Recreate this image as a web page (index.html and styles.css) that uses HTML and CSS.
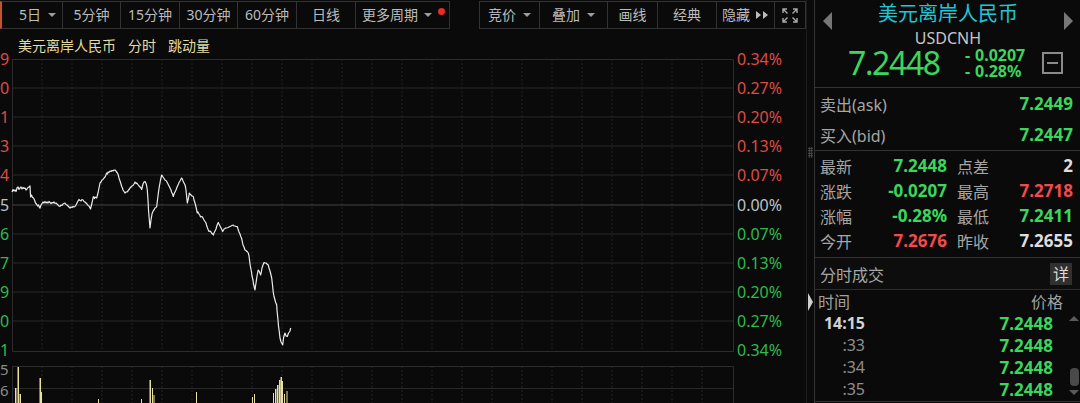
FILE: index.html
```html
<!DOCTYPE html>
<html lang="zh">
<head>
<meta charset="utf-8">
<title>USDCNH</title>
<link rel="stylesheet" href="styles.css">
</head>
<body>
<div class="app">
  <div class="main">
    <div class="toolbar">
      <div class="tb-group">
        <div class="btn first b63">5日<span class="caret"></span></div>
        <div class="btn b59">5分钟</div>
        <div class="btn b60">15分钟</div>
        <div class="btn b59">30分钟</div>
        <div class="btn b60">60分钟</div>
        <div class="btn b60">日线</div>
        <div class="btn b95 more">更多周期<span class="caret"></span><span class="dot"></span></div>
      </div>
      <div class="tb-group">
        <div class="btn b61">竞价<span class="caret"></span></div>
        <div class="btn b69">叠加<span class="caret"></span></div>
        <div class="btn b51">画线</div>
        <div class="btn b60">经典</div>
        <div class="btn b59 hide">隐藏<svg width="14" height="8" viewBox="0 0 14 8"><polygon points="1,0 6,4 1,8" fill="#bdbdbd"/><polygon points="8,0 13,4 8,8" fill="#bdbdbd"/></svg></div>
        <div class="btn b32"><svg width="18" height="17" viewBox="0 0 18 17" fill="none" stroke="#a8a8a8" stroke-width="1.4"><path d="M2 6V2H6M2 2L6.5 6.5"/><path d="M12 2H16V6M16 2L11.5 6.5"/><path d="M2 11V15H6M2 15L6.5 10.5"/><path d="M16 11V15H12M16 15L11.5 10.5"/></svg></div>
      </div>
    </div>
    <div class="chart">
      <div class="chart-title"><span>美元离岸人民币</span><span>分时</span><span>跳动量</span></div>
      <svg class="plot" width="806" height="373" viewBox="0 30 806 373">
        <g class="vgrid">
          <path d="M42 59V351M72 59V351M102 59V351M132 59V351M162 59V351M192 59V351M222 59V351M252 59V351M282 59V351M312 59V351M342 59V351M372 59V351M402 59V351M432 59V351M462 59V351M492 59V351M522 59V351M552 59V351M582 59V351M612 59V351M642 59V351M672 59V351M702 59V351"/>
          <path d="M42 366V403M72 366V403M102 366V403M132 366V403M162 366V403M192 366V403M222 366V403M252 366V403M282 366V403M312 366V403M342 366V403M372 366V403M402 366V403M432 366V403M462 366V403M492 366V403M522 366V403M552 366V403M582 366V403M612 366V403M642 366V403M672 366V403M702 366V403"/>
        </g>
        <g class="hgrid">
          <path d="M12 88H733M12 117H733M12 146H733M12 175H733M12 234H733M12 263H733M12 292H733M12 321H733M12 388.5H733"/>
        </g>
        <path class="zero" d="M12 205H733"/>
        <path class="frame" d="M12.5 59.5H733.5V351.5H12.5Z"/>
        <path class="frame" d="M12.5 403V366.5H733.5V403"/>

        <g class="bars">
          <rect x="15" y="388" width="1.5" height="15"/>
          <rect x="17.5" y="367" width="1.5" height="36"/>
          <rect x="19.5" y="394" width="1.5" height="9"/>
          <rect x="39.5" y="378" width="1.5" height="25"/>
          <rect x="41" y="392" width="1" height="11"/>
          <rect x="98" y="399" width="1" height="4"/>
          <rect x="141" y="399" width="1" height="4"/>
          <rect x="149.5" y="380" width="1.5" height="23"/>
          <rect x="152" y="388" width="1" height="15"/>
          <rect x="153.5" y="395" width="1" height="8"/>
          <rect x="196" y="392" width="1" height="11"/>
          <rect x="252" y="397" width="1" height="6"/>
          <rect x="254" y="394" width="1" height="9"/>
          <rect x="273" y="393" width="1" height="10"/>
          <rect x="275" y="389" width="1.5" height="14"/>
          <rect x="277" y="385" width="1.5" height="18"/>
          <rect x="279" y="380" width="1.5" height="23"/>
          <rect x="280.5" y="377" width="1.5" height="26"/>
          <rect x="282" y="381" width="1" height="22"/>
          <rect x="284" y="394" width="1" height="9"/>
          <rect x="286.5" y="391" width="1" height="12"/>
        </g>

        <polyline class="line" points="12,192 13,189.5 14,191 15,190 16,191.5 17,188 18,187 19,189.5 20,188 21,187 22,189 23,187.5 24,188.5 25,188 26,190 27,189 28,187.5 29,187 30,186 30.6,197 31.5,195 32.5,197.5 33.5,198 34.5,200 35.5,203 36.5,204 37.5,206 38.5,205 39.5,207.5 40,208 41,205 42,203.5 43,202 44,203 45,201.5 46,203 47,202 48,203 49,201.5 50,202.5 51,203.5 52,202.5 53,203 54,202 55,203.5 56,203 57,204 58,205 59,206 60,206.5 61,205 62,205.5 63,204 64,203.5 65,203 66,204.5 67,205 68,206 69,207 70,208 71,207 72,207.5 73,206.5 74,207 75,206.5 76,205 77,203 78,201 79,199.5 80,200.5 81,201 82,199.5 83,200 84,201.5 85,202 86,203 87,204 88,205.5 89,206 90,208 90.5,209 91.5,205 92,203 93.3,196.5 94.5,198.5 95,197 96.7,198 97.5,195 98,193 99,188 100,183 101,182 102,180 103,179.5 104,178 105,177 105.5,176 106.7,173 107.5,174 108,172 109,172.5 110,171 111,171.5 112,170.5 113,171 114,170 115,170 116,171 116.5,172 117.5,173 118.3,175 119,178 120,181 121,184 121.7,186.5 122.5,188 123,190 124,191.5 125,193 126,192 127,192 128,191 128.5,190 129.5,189 130,188 131,187 132,186 133,185.5 134,184 135,182 136,183.5 136.5,183 137.5,184 138.3,185 139,186 140,187 141,188 141.7,189.5 142.5,186 143,184 144,182 145,181.5 146,183.5 146.5,185 147.3,190 148,200 148.5,210 149.5,222 150,228 151,220 152,214 152.7,212 153.5,210.5 154,210 155,208 156,207.5 156.7,206.5 157.5,200 158.5,192 159.3,186.5 160,183 160.5,180 161.7,175 162.5,176 163,177 164,178.5 165,180 166,180.5 166.7,181.5 167.5,183 168,184 169,186 170,188 171,190 171.5,192 172.5,194 173.3,196.5 174,194 175,192 176,190 176.7,188 177.5,186 178.5,184 179,182.5 180,181 181,179 181.7,178 182.5,179.5 183,181 184,183 185,185 185.5,187 186,190 187.3,203 188,200 188.5,198 189.3,193 190,194 191,195 192,196 193.3,196.5 194,200 195,203 196,207 197.3,213 198,212 199,214 200,215.5 200.5,217 201.7,216.5 202.5,217 203,218 204,220 205,221.5 206,223 206.5,225 207.5,228 208.3,230 209,231.5 210,231 211,232 211.5,233 212.5,234 213.3,235 214,233 215,231 216,229 216.5,227 217.5,224 218.3,222.5 219,224 220,226 221,228 221.5,229 222.7,231.5 223.5,230 224,229 225,228.5 225.5,228 226.7,228 228,227.5 229,227 230,226.5 231,226 232,225.5 233.3,225 234,226 235,226 236,226.5 237.3,226.5 238,229 239,232 240,234 240.7,236.5 241.5,238 242,240 243,245 244,247 245,250 246,250.5 246.5,251 247.5,252 248.3,253 249,256 249.5,260 250,264 250.7,268 251.5,272 252,276 253,280 253.5,284 254.5,288 255,290 255.5,286 256,283 257,276 258,271 258.3,270 259,271 259.5,272 260.3,274 260.7,275 261.5,271 262,268 263,265 264,262.5 265,263 266,263 267,264 268.3,265 269,268 270,271 271,275 271.7,278 272.5,285 273.2,292 274,296.5 275,300 275.5,302 276.7,305 277,310 277.5,315 278,320 278.5,326 279.3,332 280,338 281,342 282,343.5 282.7,345 283.2,341 283.5,338 284.3,335 285,333 285.5,334.5 286,336 287.3,336.5 288,334.5 288.5,333 289.3,332 290,331 290.7,328"/>

        <g class="ax">
          <text class="red" x="0" y="65">9</text>
          <text class="red" x="0" y="94">0</text>
          <text class="red" x="0" y="123">1</text>
          <text class="red" x="0" y="152">3</text>
          <text class="red" x="0" y="181">4</text>
          <text class="gry" x="0" y="211">5</text>
          <text class="grn" x="0" y="240">6</text>
          <text class="grn" x="0" y="269">7</text>
          <text class="grn" x="0" y="298">9</text>
          <text class="grn" x="0" y="327">0</text>
          <text class="grn" x="0" y="356">1</text>
          <text class="vol" x="0" y="375">5</text>
          <text class="vol" x="0" y="396">6</text>

          <text class="red" x="737" y="65">0.34%</text>
          <text class="red" x="737" y="94">0.27%</text>
          <text class="red" x="737" y="123">0.20%</text>
          <text class="red" x="737" y="152">0.13%</text>
          <text class="red" x="737" y="181">0.07%</text>
          <text class="gry" x="737" y="211">0.00%</text>
          <text class="grn" x="737" y="240">0.07%</text>
          <text class="grn" x="737" y="269">0.13%</text>
          <text class="grn" x="737" y="298">0.20%</text>
          <text class="grn" x="737" y="327">0.27%</text>
          <text class="grn" x="737" y="356">0.34%</text>
        </g>
      </svg>
    </div>
  </div>

  <div class="splitter">
    <div class="grip"></div>
    <div class="pull"></div>
  </div>

  <div class="panel">
    <div class="quote-head">
      <div class="head-top">
        <span class="tri-left"></span>
        <div class="names">
          <div class="cn-name">美元离岸人民币</div>
          <div class="code">USDCNH</div>
        </div>
        <span class="tri-right"></span>
      </div>
      <div class="price-row">
        <div class="big-price">7.2448</div>
        <div class="changes">
          <div class="chg"><span class="sign">-</span>0.0207</div>
          <div class="chg"><span class="sign">-</span>0.28%</div>
        </div>
        <div class="collapse"><span></span></div>
      </div>
    </div>

    <div class="askbid">
      <div class="ab-row"><span class="lbl">卖出(ask)</span><span class="val up">7.2449</span></div>
      <div class="ab-row"><span class="lbl">买入(bid)</span><span class="val up">7.2447</span></div>
    </div>

    <div class="stats">
      <span class="lbl">最新</span><span class="val up">7.2448</span><span class="lbl l2">点差</span><span class="val wht">2</span>
      <span class="lbl">涨跌</span><span class="val up">-0.0207</span><span class="lbl l2">最高</span><span class="val dn">7.2718</span>
      <span class="lbl">涨幅</span><span class="val up">-0.28%</span><span class="lbl l2">最低</span><span class="val up">7.2411</span>
      <span class="lbl">今开</span><span class="val dn">7.2676</span><span class="lbl l2">昨收</span><span class="val wht">7.2655</span>
    </div>

    <div class="trade-head">
      <span class="lbl">分时成交</span>
      <span class="detail">详</span>
    </div>

    <div class="trades">
      <div class="trades-cols"><span>时间</span><span>价格</span></div>
      <div class="trades-body">
        <div class="trade-rows">
          <div class="tr"><span class="t strong">14:15</span><span class="p">7.2448</span></div>
          <div class="tr"><span class="t">:33</span><span class="p">7.2448</span></div>
          <div class="tr"><span class="t">:34</span><span class="p">7.2448</span></div>
          <div class="tr"><span class="t">:35</span><span class="p">7.2448</span></div>
        </div>
        <div class="scroll">
          <span class="s-up"></span>
          <span class="s-thumb"></span>
          <span class="s-down"></span>
        </div>
      </div>
    </div>
  </div>
</div>
</body>
</html>
```

FILE: styles.css
```css
* { box-sizing: border-box; margin: 0; padding: 0; }
html, body { width: 1080px; height: 403px; overflow: hidden; background: #0a0a0a; }
body { font-family: "Noto Sans", "Noto Sans CJK SC", sans-serif; color: #a8a8a8; }

.app { display: flex; height: 403px; }
.main { width: 806px; display: flex; flex-direction: column; }

/* toolbar */
.toolbar { height: 30px; padding-top: 1px; display: flex; justify-content: space-between; }
.tb-group { display: flex; }
.btn {
  height: 28px; border: 1px solid #333; margin-right: -1px;
  display: flex; align-items: center; justify-content: center; gap: 7px;
  font-size: 14px; line-height: 1; color: #bcbcbc;
}
.tb-group .btn:last-child { margin-right: 0; }
.btn.first { border-left: 2px solid #c2532c; justify-content: flex-start; padding-left: 17px; }
.b32 { width: 32px; } .b51 { width: 51px; } .b59 { width: 59px; } .b60 { width: 60px; }
.b61 { width: 61px; } .b63 { width: 63px; } .b69 { width: 69px; } .b95 { width: 95px; }
.caret { width: 0; height: 0; border-left: 4px solid transparent; border-right: 4px solid transparent; border-top: 4px solid #9c9c9c; }
.more { gap: 6px; padding-left: 2px; }
.dot { width: 7px; height: 7px; border-radius: 50%; background: #ec2a2c; align-self: flex-start; margin-top: 6px; }
.hide { gap: 5px; }

/* chart */
.chart { position: relative; flex: 1; }
.chart-title { position: absolute; left: 18px; top: 6px; display: flex; gap: 12px; font-size: 14px; line-height: 20px; color: #e4dca4; }
.plot { display: block; }
.vgrid path { stroke: #222; stroke-width: 1; stroke-dasharray: 2 2; fill: none; }
.hgrid path { stroke: #282828; stroke-width: 1; fill: none; }
.zero { stroke: #454545; stroke-width: 1.2; fill: none; }
.frame { stroke: #2c2c2c; stroke-width: 1; fill: none; }
.bars rect { fill: #e9e1a0; }
.line { fill: none; stroke: #ececec; stroke-width: 1.2; stroke-linejoin: round; }
.ax text { font-family: "Noto Sans", sans-serif; font-size: 16px; }
.ax .red { fill: #df4a44; }
.ax .grn { fill: #2dbb4b; }
.ax .gry { fill: #b9c2ca; }
.ax .vol { fill: #8c8c8c; font-size: 15px; }

/* splitter */
.splitter { width: 9px; border-left: 1px solid #1d1d1d; border-right: 1px solid #343434; display: flex; flex-direction: column; align-items: center; }
.grip { width: 5px; height: 11px; margin-top: 147px; background-image: radial-gradient(circle, #5a5a5a 0.8px, transparent 1px); background-size: 2.5px 2.5px; }
.pull { width: 0; height: 0; margin-top: 135px; border-top: 9px solid transparent; border-bottom: 9px solid transparent; border-left: 5px solid #cfcfcf; }

/* right panel */
.panel { width: 265px; display: flex; flex-direction: column; }
.lbl { color: #a6a6a6; font-size: 16px; }
.val { font-weight: 700; font-size: 17px; text-align: right; }
.up { color: #3bd65b; }
.dn { color: #f24b4b; }
.wht { color: #dedede; }

.quote-head { height: 88px; border-bottom: 1px solid #333; }
.head-top { display: flex; align-items: center; justify-content: space-between; padding: 0 7px 0 8px; height: 47px; }
.tri-left { width: 0; height: 0; border-top: 9px solid transparent; border-bottom: 9px solid transparent; border-right: 9px solid #777; margin-bottom: 5px; }
.tri-right { width: 0; height: 0; border-top: 9px solid transparent; border-bottom: 9px solid transparent; border-left: 9px solid #777; margin-bottom: 5px; }
.names { display: flex; flex-direction: column; align-items: center; padding-top: 3px; }
.cn-name { font-size: 20px; line-height: 22px; color: #1fc6d6; }
.code { font-size: 16px; line-height: 18px; color: #c6c6c6; margin-top: 4px; }
.price-row { display: flex; align-items: center; padding-left: 33px; height: 32px; }
.big-price { width: 115px; font-size: 32px; letter-spacing: -1.4px; line-height: 32px; color: #3bd65b; }
.changes { width: 79px; color: #3bd65b; font-weight: 700; font-size: 16px; line-height: 16px; }
.chg { line-height: 16px; }
.changes .sign { display: inline-block; width: 12px; padding-left: 2px; }
.collapse { width: 21px; height: 22px; border: 2px solid #8a8a8a; display: flex; align-items: center; justify-content: center; }
.collapse span { width: 11px; height: 2px; background: #8a8a8a; }

.askbid { border-bottom: 1px solid #333; padding: 0 7px 0 5px; }
.ab-row { height: 31px; display: flex; align-items: center; justify-content: space-between; }

.stats { display: grid; grid-template-columns: 45px 82px 55px 71px; grid-auto-rows: 25px; align-items: center; padding: 2px 0 4px 5px; border-bottom: 1px solid #333; }
.stats .l2 { padding-left: 10px; }

.trade-head { height: 32px; display: flex; align-items: center; justify-content: space-between; padding: 0 8px 0 5px; border-bottom: 1px solid #2c2c2c; background: #0d0d0d; }
.detail { width: 22px; height: 22px; background: #303030; color: #dcdcdc; font-size: 16px; line-height: 22px; text-align: center; }

.trades { border-bottom: 1px solid #333; height: 112px; }
.trades-cols { height: 22px; display: flex; align-items: center; justify-content: space-between; padding: 0 17px 0 3px; font-size: 16px; color: #a0a0a0; }
.trades-body { display: flex; }
.trade-rows { width: 253px; padding-right: 15px; }
.tr { height: 22px; display: flex; align-items: center; justify-content: space-between; }
.t { width: 50px; text-align: right; font-size: 16px; color: #8e8e8e; }
.t.strong { font-weight: 700; color: #d2d2d2; }
.p { font-weight: 700; font-size: 17px; color: #3bd65b; }
.scroll { width: 12px; height: 88px; display: flex; flex-direction: column; align-items: center; }
.s-up { width: 0; height: 0; margin-top: 4px; border-left: 5px solid transparent; border-right: 5px solid transparent; border-bottom: 5px solid #5a5a5a; }
.s-thumb { width: 9px; height: 18px; margin-top: 47px; border-radius: 4px; background: #4a4a4a; }
.s-down { width: 0; height: 0; margin-top: 4px; border-left: 5px solid transparent; border-right: 5px solid transparent; border-top: 5px solid #5a5a5a; }
```
